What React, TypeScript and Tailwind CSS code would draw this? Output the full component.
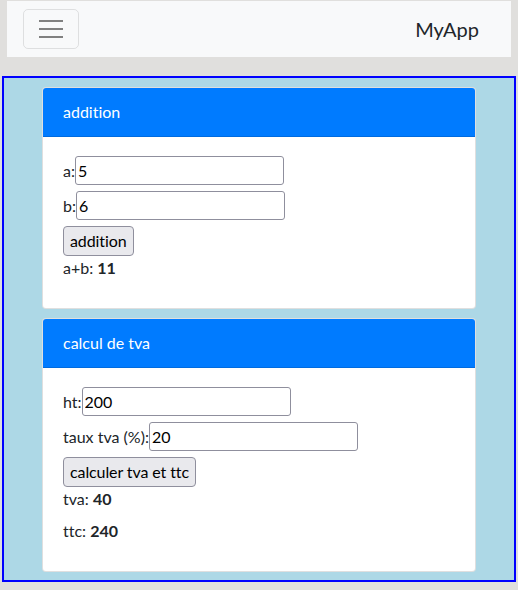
import { useState } from 'react'

const font = { fontFamily: '"Segoe UI", Lato, "Noto Sans", sans-serif' }

function Field({ label, value, onChange }: { label: string; value: string; onChange: (v: string) => void }) {
  return (
    <div className="flex items-center mb-[6px] h-[29px]">
      <span>{label}</span>
      <input
        value={value}
        onChange={e => onChange(e.target.value)}
        className="h-[29px] w-[209px] border border-[#8f8f9d] rounded-[3px] px-[2px] bg-white text-[16px] text-black outline-none"
      />
    </div>
  )
}

function Card({ title, children }: { title: string; children: React.ReactNode }) {
  return (
    <div className="bg-white border border-black/[.125] rounded-[4px] overflow-hidden">
      <div className="bg-[#007bff] text-white px-5 py-3 leading-6 border-b border-black/[.125]">{title}</div>
      <div className="px-5 pt-[19px] pb-5">{children}</div>
    </div>
  )
}

export default function App() {
  const [a, setA] = useState('5')
  const [b, setB] = useState('6')
  const [sum, setSum] = useState(11)
  const [ht, setHt] = useState('200')
  const [taux, setTaux] = useState('20')
  const [tva, setTva] = useState(40)
  const [ttc, setTtc] = useState(240)

  const btn = 'h-[30px] px-[6px] bg-[#e9e9ed] border border-[#8f8f9d] rounded-[4px] text-black text-[16px] tracking-[-0.1px]'

  return (
    <div
      className="min-h-[590px] bg-[#e0dfdd] pt-[1px] text-[16px] text-[#212529] [font-variant-ligatures:none]"
      style={font}
    >
      <nav className="mx-[7px] h-[56px] bg-[#f8f9fa] flex items-center justify-between pl-4 pr-8">
        <button className="w-[56px] h-[40px] border border-black/10 rounded-[5px] flex flex-col items-center justify-center gap-[6px]">
          <span className="block w-6 h-[2px] bg-[#808080]" />
          <span className="block w-6 h-[2px] bg-[#808080]" />
          <span className="block w-6 h-[2px] bg-[#808080]" />
        </button>
        <span className="text-[20px] text-[#212529]">MyApp</span>
      </nav>

      <div className="mx-[2px] mt-[19px] border-2 border-[#0000ff] bg-[#add8e6] px-[38px] pt-[9px] pb-[8px] flex flex-col gap-[9px]">
        {/* addition */}
        <Card title="addition">
          <Field label="a:" value={a} onChange={setA} />
          <Field label="b:" value={b} onChange={setB} />
          <button className={btn} onClick={() => setSum(Number(a) + Number(b))}>addition</button>
          <p className="leading-6 mb-2">a+b: <b>{sum}</b></p>
        </Card>

        {/* tva */}
        <Card title="calcul de tva">
          <Field label="ht:" value={ht} onChange={setHt} />
          <Field label="taux tva (%):" value={taux} onChange={setTaux} />
          <button
            className={btn}
            onClick={() => {
              const t = (Number(ht) * Number(taux)) / 100
              setTva(t)
              setTtc(Number(ht) + t)
            }}
          >
            calculer tva et ttc
          </button>
          <p className="leading-6 mb-2">tva: <b>{tva}</b></p>
          <p className="leading-6 mb-2">ttc: <b>{ttc}</b></p>
        </Card>
      </div>
    </div>
  )
}
